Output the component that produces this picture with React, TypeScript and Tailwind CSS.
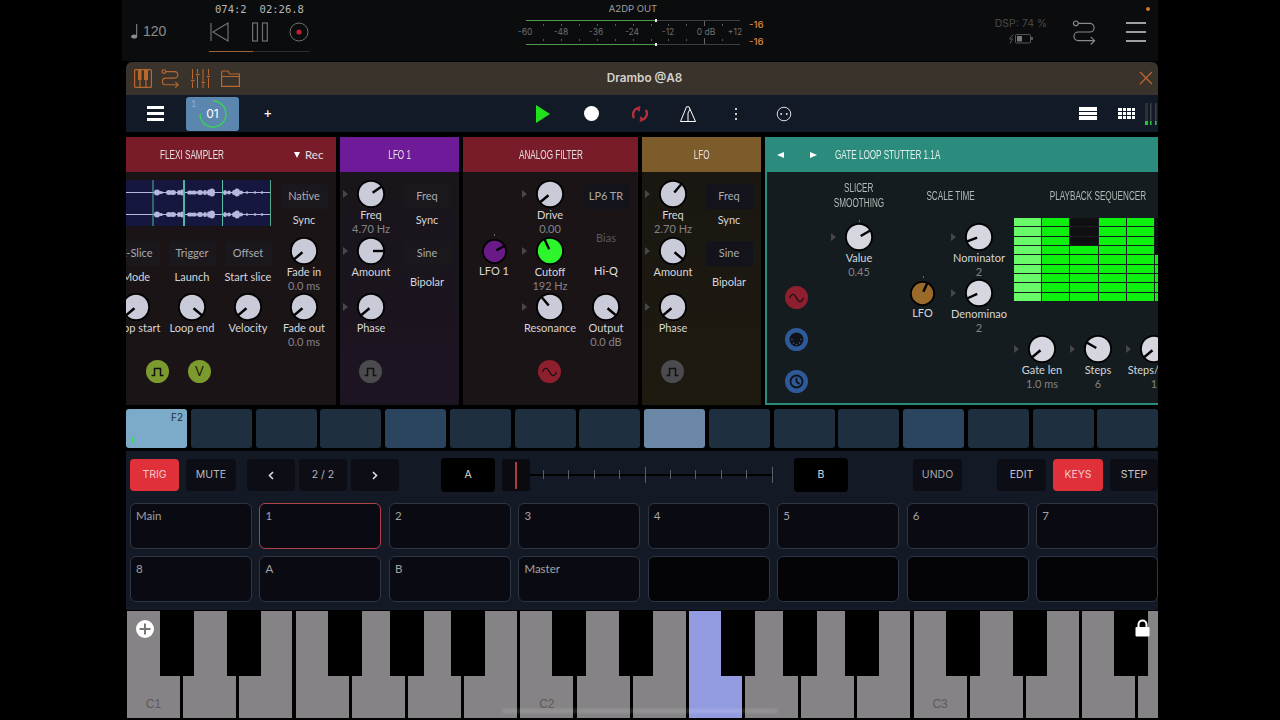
import type { ReactNode } from "react";

const Narrow = ({ children, left }: { children: ReactNode; left?: boolean }) => (
  <span className={`inline-block whitespace-nowrap scale-x-[.68] ${left ? "origin-left" : ""}`}>{children}</span>
);

const Knob = ({ angle, color = "#c9cbd9", size = 28 }: { angle: number; color?: string; size?: number }) => {
  const r = size / 2;
  const rad = (angle * Math.PI) / 180;
  const x = r + Math.sin(rad) * (r - 1.5);
  const y = r - Math.cos(rad) * (r - 1.5);
  const x0 = r + Math.sin(rad) * 2;
  const y0 = r - Math.cos(rad) * 2;
  return (
    <svg width={size} height={size} viewBox={`0 0 ${size} ${size}`} className="block shrink-0">
      <circle cx={r} cy={r} r={r} fill="#000" />
      <circle cx={r} cy={r} r={r - 1.8} fill={color} />
      <line x1={x0} y1={y0} x2={x} y2={y} stroke="#000" strokeWidth="2.4" />
    </svg>
  );
};

const Dot = () => <div className="absolute left-1/2 top-[-3px] h-[2px] w-[1px] bg-[#6a6a6e]" />;

const KnobCell = ({
  name,
  value,
  angle,
  color,
  arrow,
  clip,
  dot,
}: {
  name: string;
  value?: string;
  angle: number;
  color?: string;
  arrow?: boolean;
  clip?: boolean;
  dot?: boolean;
}) => (
  <div className="relative flex w-[56px] flex-col items-center">
    {arrow && (
      <div className="absolute left-[0px] top-[10px] h-0 w-0 border-y-[4px] border-l-[5px] border-y-transparent border-l-[#47474b]" />
    )}
    {dot && <Dot />}
    <Knob angle={angle} color={color} />
    <div className={`whitespace-nowrap text-[11px] leading-[14px] text-[#d6d6da] ${clip ? "w-[56px] self-start overflow-hidden" : ""}`}>
      {name}
    </div>
    {value && <div className="whitespace-nowrap text-[11px] leading-[13px] text-[#838387]">{value}</div>}
  </div>
);

const SmallKnob = ({ name, angle, color }: { name: string; angle: number; color: string }) => (
  <div className="relative flex flex-col items-center pt-[1.5px]">
    <Dot />
    <Knob angle={angle} color={color} size={25} />
    <div className="text-[11px] leading-[14px] text-[#d6d6da]">{name}</div>
  </div>
);

const SelectCell = ({
  text,
  label,
  dark,
  wide,
}: {
  text: string;
  label?: string;
  dark?: boolean;
  wide?: boolean;
}) => (
  <div className="flex w-[56px] flex-col items-center pt-[4px]">
    <div
      className={`flex h-[25px] w-[47px] items-center justify-center whitespace-nowrap rounded-[2px] text-[11px] text-[#a9a9ae] ${
        dark ? "bg-[#13131b]" : "bg-[#1a181d]"
      }`}
    >
      {text}
    </div>
    {label && (
      <div className={`whitespace-nowrap text-[11px] leading-[14px] text-[#d6d6da] ${wide ? "mt-[9px]" : "mt-[4px]"}`}>
        {label}
      </div>
    )}
  </div>
);

const Pulse = () => (
  <svg width="13" height="10" viewBox="0 0 13 10" fill="none" stroke="#111" strokeWidth="1.5">
    <path d="M0.5 8.5H3.5V1.5H9.5V8.5H12.5" />
  </svg>
);

const Sine = ({ stroke = "#1a0c10" }: { stroke?: string }) => (
  <svg width="15" height="10" viewBox="0 0 15 10" fill="none" stroke={stroke} strokeWidth="1.2">
    <path d="M0.5 5C2.5 0 5 0 7.5 5S12.5 10 14.5 5" />
  </svg>
);

const Mod = ({ color, children }: { color: string; children: ReactNode }) => (
  <div className={`flex h-[23px] w-[23px] shrink-0 items-center justify-center rounded-full ${color}`}>{children}</div>
);

const Header = ({ color, children }: { color: string; children: ReactNode }) => (
  <div className={`flex h-[35px] shrink-0 items-center justify-center font-['Liberation_Sans'] text-[12px] text-[#e6e0e2] ${color}`}>
    {children}
  </div>
);

const BLOBS = [
  [157, 3, 3],
  [161, 2, 1.5],
  [169, 3, 2.5],
  [173, 3, 2.5],
  [179, 2, 2.5],
  [182, 2, 3],
  [190, 3, 2],
  [194, 3, 2],
  [200, 3, 2.5],
  [205, 2, 2.5],
  [209, 2, 3],
  [212, 3, 4],
  [225, 2, 2.5],
  [229, 2, 2],
  [234, 2, 2.5],
  [237, 3, 4],
  [241, 2, 2],
  [247, 1.3, 1.3],
  [255, 1.3, 1.3],
  [262, 1.3, 1.3],
];

const Waveform = () => (
  <svg width="145" height="46" viewBox="126 180 145 46" className="block bg-[#15173f]">
    {[12.5, 34.5].map((dy) => (
      <g key={dy} fill="#b7b8de">
        <rect x="126" y={180 + dy - 0.5} width="145" height="1" />
        {BLOBS.map(([x, rx, ry]) => (
          <ellipse key={x} cx={x} cy={180 + dy} rx={rx} ry={ry} />
        ))}
      </g>
    ))}
    <rect x="152.5" y="180" width="1" height="46" fill="#4fb89a" />
    <rect x="183" y="180" width="2" height="46" fill="#4fb89a" />
    <rect x="222" y="180" width="1" height="46" fill="#58c0a8" />
    <rect x="270" y="180" width="1" height="46" fill="#4fa88a" />
  </svg>
);

const Sampler = () => (
  <div className="flex w-[210px] shrink-0 flex-col overflow-hidden">
    <Header color="bg-[#771c28]">
      <div className="flex w-full items-center">
        <span className="w-[132px] text-center">
          <Narrow>FLEXI SAMPLER</Narrow>
        </span>
        <span className="ml-[36px] flex items-center gap-[5px] font-['Lato'] text-[11.5px]">
          <span className="h-0 w-0 border-x-[3.5px] border-t-[6px] border-x-transparent border-t-white" />
          Rec
        </span>
      </div>
    </Header>
    <div className="flex-1 bg-[#1b1417] pt-[8px]">
      <div className="ml-[-18px] grid w-[224px] grid-cols-[repeat(4,56px)] grid-rows-[57px_56px_56px]">
        <div className="col-span-3 pl-[18px]">
          <Waveform />
        </div>
        <SelectCell text="Native" label="Sync" />
        <SelectCell text="X-Slice" label="Mode" />
        <SelectCell text="Trigger" label="Launch" />
        <SelectCell text="Offset" label="Start slice" />
        <KnobCell name="Fade in" value="0.0 ms" angle={-130} />
        <KnobCell name="Loop start" angle={-130} />
        <KnobCell name="Loop end" angle={130} />
        <KnobCell name="Velocity" angle={-130} />
        <KnobCell name="Fade out" value="0.0 ms" angle={-130} />
      </div>
      <div className="mt-[11px] flex gap-[19px] pl-[20px]">
        <Mod color="bg-[#7c9b2e]">
          <Pulse />
        </Mod>
        <Mod color="bg-[#7c9b2e]">
          <span className="text-[13px] text-[#1c2208]">V</span>
        </Mod>
      </div>
    </div>
  </div>
);

const LfoModule = ({
  title,
  head,
  body,
  freq,
  freqAngle,
  ampAngle,
  dark,
}: {
  title: string;
  head: string;
  body: string;
  freq: string;
  freqAngle: number;
  ampAngle: number;
  dark?: boolean;
}) => (
  <div className="flex w-[119px] shrink-0 flex-col overflow-hidden">
    <Header color={head}>
      <Narrow>{title}</Narrow>
    </Header>
    <div className={`flex-1 bg-linear-to-b pl-[3px] pt-[8px] ${body}`}>
      <div className="grid grid-cols-[repeat(2,56px)] grid-rows-[57px_56px_56px]">
        <KnobCell name="Freq" value={freq} angle={freqAngle} arrow />
        <SelectCell text="Freq" label="Sync" dark={dark} />
        <KnobCell name="Amount" angle={ampAngle} arrow />
        <SelectCell text="Sine" label="Bipolar" wide dark={dark} />
        <KnobCell name="Phase" angle={-130} arrow />
      </div>
      <div className="mt-[11px] pl-[16px]">
        <Mod color="bg-[#4b4b4f]">
          <Pulse />
        </Mod>
      </div>
    </div>
  </div>
);

const Filter = () => (
  <div className="flex w-[175px] shrink-0 flex-col overflow-hidden">
    <Header color="bg-[#771c28]">
      <Narrow>ANALOG FILTER</Narrow>
    </Header>
    <div className="flex-1 bg-[#1b1417] pl-[3px] pt-[8px]">
      <div className="grid grid-cols-[repeat(3,56px)] grid-rows-[57px_56px_56px]">
        <div />
        <KnobCell name="Drive" value="0.00" angle={-130} arrow />
        <SelectCell text="LP6 TR" dark />
        <SmallKnob name="LFO 1" angle={60} color="#6a1a86" />
        <KnobCell name="Cutoff" value="192 Hz" angle={-25} color="#2cf52c" arrow />
        <div className="flex flex-col items-center text-[11px] leading-[14px]">
          <div className="mt-[-6px] text-[#5a585c]">Bias</div>
          <div className="mt-[19px] text-[#e0e0e4]">Hi-Q</div>
        </div>
        <div />
        <KnobCell name="Resonance" angle={-40} arrow />
        <KnobCell name="Output" value="0.0 dB" angle={130} />
      </div>
      <div className="mt-[11px] pl-[72px]">
        <Mod color="bg-[#8d1f2e]">
          <Sine />
        </Mod>
      </div>
    </div>
  </div>
);

const SEQ_ROWS = [0, 1, 2, 3, 4, 5, 6, 7, 8];
const SEQ_COLS = [0, 1, 2, 3, 4, 5];

const seqCell = (row: number, col: number) => {
  if (col === 2 && row < 3) return "bg-[#0f0f12]";
  if (col === 5 && row < 4) return "bg-[#0f0f12]";
  if (col === 0) return "bg-[#69fa69]";
  return "bg-[#0ef10e]";
};

const Gate = () => (
  <div className="flex min-w-0 flex-1 flex-col overflow-hidden">
    <Header color="bg-[#2b8c7e]">
      <div className="flex w-full items-center pl-[12px] text-[#e0efe9]">
        <span className="h-0 w-0 border-y-[3.5px] border-r-[7px] border-y-transparent border-r-white" />
        <span className="ml-[26px] h-0 w-0 border-y-[3.5px] border-l-[7px] border-y-transparent border-l-white" />
        <span className="ml-[18px]">
          <Narrow left>GATE LOOP STUTTER 1.1A</Narrow>
        </span>
      </div>
    </Header>
    <div className="flex flex-1 border-b-2 border-l-2 border-[#2b8c7e] bg-[#141c1f] pt-[9px] text-[#b4bab9]">
      <div className="flex w-[59px] shrink-0 flex-col items-center gap-[19px] pt-[105px]">
        <Mod color="bg-[#8d1f2e]">
          <Sine />
        </Mod>
        <Mod color="bg-[#2f5a9a]">
          <svg width="15" height="15" viewBox="0 0 15 15">
            <circle cx="7.5" cy="7.5" r="7" fill="#101418" />
            <g fill="#2f5a9a">
              <circle cx="3" cy="7.5" r="0.8" />
              <circle cx="12" cy="7.5" r="0.8" />
              <circle cx="4.5" cy="11" r="0.8" />
              <circle cx="10.5" cy="11" r="0.8" />
              <circle cx="7.5" cy="12.5" r="0.8" />
            </g>
          </svg>
        </Mod>
        <Mod color="bg-[#2f5a9a]">
          <svg width="15" height="15" viewBox="0 0 15 15" fill="none" stroke="#101418" strokeWidth="1.8">
            <circle cx="7.5" cy="7.5" r="6" />
            <path d="M7.5 3.8V7.8L10.5 10" />
          </svg>
        </Mod>
      </div>
      <div className="flex w-[66px] shrink-0 flex-col items-center">
        <div className="flex h-[42px] flex-col items-center font-['Liberation_Sans'] text-[12px] leading-[15px]">
          <Narrow>SLICER</Narrow>
          <Narrow>SMOOTHING</Narrow>
        </div>
        <KnobCell name="Value" value="0.45" angle={60} arrow dot color="#d5d6e0" />
      </div>
      <div className="ml-[2px] flex w-[113px] shrink-0 flex-col">
        <div className="h-[42px] pt-[7.5px] text-center font-['Liberation_Sans'] text-[12px] leading-[15px]">
          <Narrow>SCALE TIME</Narrow>
        </div>
        <div className="grid grid-cols-[57px_56px] grid-rows-[56px_56px]">
          <div />
          <KnobCell name="Nominator" value="2" angle={-110} color="#d5d6e0" arrow />
          <SmallKnob name="LFO" angle={25} color="#9a6a2a" />
          <KnobCell name="Denominaotr" value="2" angle={-115} color="#d5d6e0" arrow clip />
        </div>
      </div>
      <div className="ml-[7px] flex w-[168px] shrink-0 flex-col">
        <div className="h-[37px] pt-[7.5px] text-center font-['Liberation_Sans'] text-[12px] leading-[15px]">
          <Narrow>PLAYBACK SEQUENCER</Narrow>
        </div>
        <div className="grid w-[168px] grid-cols-[repeat(6,27.2px)] gap-[1px]">
          {SEQ_ROWS.flatMap((r) => SEQ_COLS.map((c) => <div key={`${r}-${c}`} className={`h-[8.33px] ${seqCell(r, c)}`} />))}
        </div>
        <div className="mt-[34px] flex">
          <KnobCell name="Gate len" value="1.0 ms" angle={-130} color="#d5d6e0" arrow />
          <KnobCell name="Steps" value="6" angle={-60} color="#d5d6e0" arrow />
          <KnobCell name="Steps/beat" value="1" angle={-130} color="#d5d6e0" arrow />
        </div>
      </div>
    </div>
  </div>
);

const PADS = Array.from({ length: 16 }, (_, i) => i);

const padColor = (i: number) => {
  if (i === 0) return "bg-[#7babc9]";
  if (i === 8) return "bg-[#6a87a6]";
  if (i === 4 || i === 12) return "bg-[#2b4460]";
  return "bg-[#1e3040]";
};

const Btn = ({ children, className = "" }: { children: ReactNode; className?: string }) => (
  <div className={`flex h-[32px] shrink-0 items-center justify-center rounded-[4px] text-[10.5px] ${className}`}>
    {children}
  </div>
);

const TICKS = [13, 38, 64, 89, 115, 140, 165, 191, 216, 242];

const Fader = () => (
  <div className="ml-[7px] flex h-[32px] w-[271px] shrink-0">
    <div className="flex h-[32px] w-[28px] shrink-0 items-center justify-center rounded-[2px] bg-[#0a0a10]">
      <div className="h-[27px] w-[2px] bg-[#b0383e]" />
    </div>
    <svg width="243" height="32" viewBox="0 0 243 32">
      <rect x="0" y="15" width="243" height="2" fill="#000" />
      {TICKS.map((t, i) => {
        const big = i === 4 || i === 9;
        return <rect key={t} x={t} y={big ? 8 : 11} width="1" height={big ? 16 : 9} fill="#5a5f68" />;
      })}
    </svg>
  </div>
);

const TRACKS = ["Main", "1", "2", "3", "4", "5", "6", "7", "8", "A", "B", "Master", "", "", "", ""];

const WHITES = Array.from({ length: 19 }, (_, i) => i);
const BLACKS = [159.5, 226.5, 328, 390, 451, 552, 619, 721, 783, 844.5, 946, 1013, 1114];
const LABELS: Record<number, string> = { 0: "C1", 7: "C2", 14: "C3" };

const Keyboard = () => (
  <div className="relative h-[110px] overflow-hidden bg-black pt-[1px]">
    <div className="flex h-[107px] gap-[3.2px] pl-[1px]">
      {WHITES.map((i) => (
        <div key={i} className={`relative h-full w-[53px] shrink-0 ${i === 10 ? "bg-[#939be0]" : "bg-[#858385]"}`}>
          {LABELS[i] && (
            <span className="absolute bottom-[5px] left-0 w-full text-center font-['Liberation_Sans'] text-[12px] text-[#5c5a5c]">
              {LABELS[i]}
            </span>
          )}
        </div>
      ))}
    </div>
    {BLACKS.map((x) => (
      <div key={x} className="absolute top-0 h-[66px] w-[34px] bg-black" style={{ left: x - 126 }} />
    ))}
    <div className="absolute left-[10px] top-[10px] flex h-[18px] w-[18px] items-center justify-center rounded-full bg-white">
      <svg width="12" height="12" viewBox="0 0 12 12" stroke="#777" strokeWidth="2">
        <path d="M6 0.5V11.5M0.5 6H11.5" />
      </svg>
    </div>
    <svg width="15" height="18" viewBox="0 0 15 18" className="absolute left-[1009px] top-[9px]">
      <path d="M3.5 8V5.5a4 4 0 0 1 8 0V8" fill="none" stroke="#fff" strokeWidth="2" />
      <rect x="0.5" y="8" width="14" height="9.5" rx="1" fill="#fff" />
    </svg>
    <div className="absolute bottom-[7px] left-[376px] h-[4px] w-[276px] rounded-full bg-white/15 blur-[1.5px]" />
  </div>
);

const Route = ({ stroke, size = 25 }: { stroke: string; size?: number }) => (
  <svg width={size} height={size} viewBox="0 0 25 26" fill="none" stroke={stroke} strokeWidth={(1.2 * 25) / size}>
    <circle cx="3.5" cy="3.5" r="2.5" />
    <path d="M6 3.5H18a4.5 4.5 0 0 1 0 9H6a4.5 4.5 0 0 0 0 9H23M19 17.5L23 21.5L19 25.5" />
  </svg>
);

const METER_TICKS = [543, 561, 579, 597, 615, 633, 651, 668, 686, 722];
const METER_LABELS: [string, number][] = [
  ["-60", 525],
  ["-48", 561],
  ["-36", 596],
  ["-24", 632],
  ["-12", 668],
  ["0 dB", 706],
  ["+12", 735],
];

const TopBar = () => (
  <div className="flex h-[61px] bg-[#0b0c0e] text-[#8d8d8d]">
    <div className="flex w-[84px] shrink-0 items-center gap-[3px] pl-[9px] pt-[2px] text-[14px]">
      <svg width="9" height="15" viewBox="0 0 9 15" fill="#8d8d8d">
        <ellipse cx="3.2" cy="12.5" rx="3" ry="2.1" />
        <rect x="5.2" y="0" width="1" height="12" />
      </svg>
      <span className="font-['Liberation_Sans']">120</span>
    </div>
    <div className="flex w-[104px] shrink-0 flex-col">
      <div className="h-[22px] whitespace-nowrap pl-[9px] pt-[2px] font-['DejaVu_Sans_Mono'] text-[10.5px] leading-[14px] text-[#b9b9b9]">
        074:2<span className="ml-[13px]">02:26.8</span>
      </div>
      <div className="flex h-[20px] items-center pl-[4px]">
        <svg width="19" height="20" viewBox="0 0 19 20" fill="none" stroke="#707070" strokeWidth="1.2">
          <path d="M1 1V19M18 1L3 10L18 19Z" />
        </svg>
        <svg width="17" height="20" viewBox="0 0 17 20" fill="none" stroke="#707070" strokeWidth="1.2" className="ml-[23px]">
          <rect x="0.6" y="1" width="4.8" height="18" />
          <rect x="10.5" y="1" width="4.8" height="18" />
        </svg>
        <svg width="20" height="20" viewBox="0 0 20 20" className="ml-[20px]">
          <circle cx="10" cy="10" r="9" fill="none" stroke="#707070" strokeWidth="1" />
          <circle cx="10" cy="10" r="2.6" fill="#c02030" />
        </svg>
      </div>
      <div className="ml-[3px] mt-[9px] flex h-[1px] w-[101px]">
        <div className="w-[44px] bg-[#9a6238]" />
        <div className="flex-1 bg-[#2c2c2c]" />
      </div>
    </div>
    <svg width="452" height="50" viewBox="314 0 452 50" className="ml-[4px] block shrink-0">
      <text x="633" y="11.5" textAnchor="middle" fontFamily="Inter, sans-serif" fontSize="9.5" fill="#a0a0a0">
        A2DP OUT
      </text>
      <rect x="526" y="20" width="130" height="1" fill="#4f9a4c" />
      <rect x="656" y="20" width="84" height="1" fill="#3c3f3f" />
      <rect x="526" y="44" width="130" height="1" fill="#4f9a4c" />
      <rect x="656" y="44" width="84" height="1" fill="#3c3f3f" />
      <rect x="655" y="19" width="2" height="3" fill="#eee" />
      <rect x="655" y="43" width="2" height="3" fill="#eee" />
      {METER_TICKS.map((x) => (
        <g key={x} fill="#55585a">
          <rect x={x} y="24" width="1" height="2" />
          <rect x={x} y="39" width="1" height="2" />
        </g>
      ))}
      <rect x="704" y="21" width="1" height="5" fill="#666" />
      <rect x="704" y="38" width="1" height="6" fill="#666" />
      {METER_LABELS.map(([t, x]) => (
        <text key={t} x={x} y="35" textAnchor="middle" fontFamily="Inter, sans-serif" fontSize="8.5" fill="#6e6e6e">
          {t}
        </text>
      ))}
      <text x="749" y="27.5" fontFamily="Inter, sans-serif" fontSize="9.5" fontWeight="600" fill="#c87a3a">
        -16
      </text>
      <text x="749" y="44.5" fontFamily="Inter, sans-serif" fontSize="9.5" fontWeight="600" fill="#c87a3a">
        -16
      </text>
    </svg>
    <div className="ml-[220px] flex w-[70px] shrink-0 flex-col items-center pt-[17px]">
      <span className="whitespace-nowrap font-['Inter'] text-[10.5px] leading-[14px] text-[#4a4a4a]">DSP: 74 %</span>
      <svg width="26" height="10" viewBox="0 0 26 10" className="mt-[3px]" fill="none" stroke="#555">
        <path d="M5 0.5L1.5 5H4.5L2 9.5" />
        <rect x="7.5" y="0.5" width="15" height="8.5" rx="1" />
        <rect x="9" y="2" width="5" height="5.5" fill="#777" stroke="none" />
        <rect x="23" y="3" width="2" height="3" fill="#555" stroke="none" />
      </svg>
    </div>
    <div className="ml-[16px] flex w-[25px] shrink-0 items-center pt-[4px]">
      <Route stroke="#8a8a8a" />
    </div>
    <div className="relative ml-[29px] flex w-[20px] shrink-0 flex-col gap-[7px] pt-[22px]">
      <div className="h-[2px] bg-[#a0a0a0]" />
      <div className="h-[2px] bg-[#a0a0a0]" />
      <div className="h-[2px] bg-[#a0a0a0]" />
      <div className="absolute left-[20px] top-[7px] h-[4px] w-[4px] rounded-full bg-[#c87a2a]" />
    </div>
  </div>
);

const TitleBar = () => (
  <div className="relative flex h-[33px] items-center rounded-t-[6px] bg-[#3a332b] pl-[8px]">
    <svg width="18" height="19" viewBox="0 0 18 19" fill="none" stroke="#b8672f" strokeWidth="1.2">
      <rect x="0.6" y="0.6" width="16.8" height="17.8" rx="1" />
      <path d="M6 1V18M12 1V18" />
      <path d="M4 1H7.5V11H4ZM10 1H14V11H10Z" fill="#b8672f" stroke="none" />
    </svg>
    <div className="ml-[9px]">
      <Route stroke="#b8672f" size={19} />
    </div>
    <svg width="19" height="19" viewBox="0 0 19 19" fill="none" stroke="#b8672f" strokeWidth="1" className="ml-[11px]">
      <path d="M1.5 0V10M1.5 13V19M6.5 0V4M6.5 7V19M12 0V12M12 15V19M17.5 0V6M17.5 9V19" />
      <path d="M0 11.5H3.5M5 5.5H8.5M10.5 13.5H14M16 7.5H19" strokeWidth="1.5" />
    </svg>
    <svg width="19" height="17" viewBox="0 0 19 17" fill="none" stroke="#b8672f" strokeWidth="1.2" className="ml-[11px]">
      <path d="M0.6 2.5V16.4H18.4V4H8.5L7 1H1.5L0.6 2.5ZM0.6 6.5H18.4" />
    </svg>
    <div className="absolute inset-x-0 top-0 flex h-full items-center justify-center pl-[5px] font-['Inter'] text-[11.75px] font-semibold text-[#d4d2cf]">
      Drambo @A8
    </div>
    <svg width="14" height="14" viewBox="0 0 14 14" stroke="#c0672f" strokeWidth="1.2" className="absolute right-[5px] top-[9px]">
      <path d="M1 1L13 13M13 1L1 13" />
    </svg>
  </div>
);

const ToolBar = () => (
  <div className="flex h-[37px] items-center bg-[#121a27]">
    <div className="ml-[21px] flex w-[17px] shrink-0 flex-col gap-[3px]">
      <div className="h-[3px] bg-white" />
      <div className="h-[3px] bg-white" />
      <div className="h-[3px] bg-white" />
    </div>
    <div className="relative ml-[22px] flex h-[34px] w-[53px] shrink-0 items-center justify-center rounded-[3px] bg-[#5b86ae]">
      <span className="absolute left-[5px] top-0 text-[9px] text-[#8fb0d0]">1</span>
      <svg width="28" height="28" viewBox="0 0 28 28" fill="none" className="absolute left-[12.5px] top-[3px]">
        <path d="M14 1A13 13 0 1 1 1 14" stroke="#39d353" strokeWidth="1.4" />
      </svg>
      <span className="font-['Inter'] text-[12px] text-white">01</span>
    </div>
    <span className="ml-[25px] w-[8px] text-[13px] font-semibold text-white">+</span>
    <svg width="14" height="18" viewBox="0 0 14 18" className="ml-[264px]">
      <path d="M0 0L14 9L0 18Z" fill="#22e01e" />
    </svg>
    <div className="ml-[34px] h-[15px] w-[15px] rounded-full bg-white" />
    <svg width="16" height="16" viewBox="0 0 16 16" fill="none" stroke="#b5303a" strokeWidth="2.4" className="ml-[33px]">
      <path d="M2.2 12A6.5 6.5 0 0 1 5.5 2.2M13.8 4A6.5 6.5 0 0 1 10.5 13.8" />
      <path d="M8 0L4 2.5L7.5 5.5ZM8 16L12 13.5L8.5 10.5Z" fill="#b5303a" strokeWidth="0.5" />
    </svg>
    <svg width="16" height="16" viewBox="0 0 16 16" fill="none" stroke="#fff" strokeWidth="1" className="ml-[32px]">
      <path d="M0.5 15.5L6.5 0.8H9L15.5 15.5ZM8 15.5L8 7M8 7L10 3" />
    </svg>
    <div className="ml-[32px] flex w-[16px] shrink-0 flex-col items-center gap-[3px]">
      <div className="h-[2px] w-[2px] bg-[#ccc]" />
      <div className="h-[2px] w-[2px] bg-[#ccc]" />
      <div className="h-[2px] w-[2px] bg-[#ccc]" />
    </div>
    <svg width="16" height="16" viewBox="0 0 16 16" fill="none" stroke="#ddd" className="ml-[32px]">
      <circle cx="8" cy="8" r="6.8" />
      <circle cx="5.2" cy="8" r="1" fill="#ddd" stroke="none" />
      <circle cx="10.8" cy="8" r="1" fill="#ddd" stroke="none" />
    </svg>
    <div className="ml-[287px] flex w-[18px] shrink-0 flex-col gap-[1px]">
      <div className="h-[3.6px] bg-white" />
      <div className="h-[3.6px] bg-white" />
      <div className="h-[3.6px] bg-white" />
    </div>
    <div className="ml-[21px] grid w-[17px] shrink-0 grid-cols-4 gap-[1px]">
      {Array.from({ length: 12 }, (_, i) => (
        <div key={i} className="h-[3.3px] bg-white" />
      ))}
    </div>
    <svg width="13" height="22" viewBox="0 0 13 22" className="ml-[10px]">
      {[0, 5, 10].map((x) => (
        <g key={x}>
          <rect x={x} y="0" width={x ? 1.5 : 3} height="22" fill={x ? "#3c4148" : "#2c3138"} />
          <rect x={x} y="18" width={x ? 1.5 : 3} height="4" fill="#2bbf3c" />
        </g>
      ))}
    </svg>
  </div>
);

export default function App() {
  return (
    <div className="h-[720px] w-[1280px] overflow-hidden bg-black font-['Lato',sans-serif]">
      <div className="ml-[122px] w-[1036px]">
        <TopBar />
        <div className="mt-[1px] pl-[4px]">
          <TitleBar />
          <ToolBar />
          <div className="mt-[5px] flex h-[268px] gap-[4px]">
            <Sampler />
            <LfoModule
              title="LFO 1"
              head="bg-[#6f1a98]"
              body="from-[#19151a] to-[#1d1422]"
              freq="4.70 Hz"
              freqAngle={55}
              ampAngle={90}
            />
            <Filter />
            <LfoModule
              title="LFO"
              head="bg-[#7d5c2c]"
              body="from-[#1a1712] to-[#1e1a10]"
              freq="2.70 Hz"
              freqAngle={40}
              ampAngle={130}
              dark
            />
            <Gate />
          </div>
          <div className="mt-[4px] flex h-[39px] gap-[3.77px] overflow-hidden">
            {PADS.map((i) => (
              <div key={i} className={`relative h-full w-[61px] shrink-0 rounded-[3px] ${padColor(i)}`}>
                {i === 0 && (
                  <>
                    <span className="absolute right-[4px] top-[1px] font-['Inter'] text-[10px] text-[#22303a]">F2</span>
                    <span className="absolute bottom-[5px] left-[5px] h-[6px] w-[3px] bg-[#39e053]" />
                  </>
                )}
              </div>
            ))}
          </div>
          <div className="mt-[3px] h-[159px] bg-[#131a26] pl-[4px] pt-[7px] font-['Inter']">
            <div className="flex items-center">
              <Btn className="w-[49px] bg-[#e0303a] text-[#f5c8cb]">TRIG</Btn>
              <Btn className="ml-[7px] w-[50px] bg-[#0c0d15] text-[#b8b8bc]">MUTE</Btn>
              <Btn className="ml-[11px] w-[48px] bg-[#0c0d15]">
                <svg width="6" height="9" viewBox="0 0 6 9" fill="none" stroke="#ddd" strokeWidth="1.6">
                  <path d="M5 1L1.5 4.5L5 8" />
                </svg>
              </Btn>
              <Btn className="ml-[4px] w-[48px] bg-[#0c0d15] text-[#b8b8bc]">2 / 2</Btn>
              <Btn className="ml-[4px] w-[48px] bg-[#0c0d15]">
                <svg width="6" height="9" viewBox="0 0 6 9" fill="none" stroke="#ddd" strokeWidth="1.6">
                  <path d="M1 1L4.5 4.5L1 8" />
                </svg>
              </Btn>
              <Btn className="ml-[42px] !h-[34px] w-[54px] bg-black text-[#ddd]">A</Btn>
              <Fader />
              <Btn className="ml-[21px] !h-[34px] w-[54px] bg-black text-[#ddd]">B</Btn>
              <Btn className="ml-[65px] w-[49px] bg-[#0c0d15] text-[#a8a8ac]">UNDO</Btn>
              <Btn className="ml-[35px] w-[49px] bg-[#0c0d15] text-[#c8c8cc]">EDIT</Btn>
              <Btn className="ml-[7px] w-[50px] bg-[#e0303a] text-[#f5c8cb]">KEYS</Btn>
              <Btn className="ml-[7px] w-[48px] bg-[#0c0d15] text-[#c8c8cc]">STEP</Btn>
            </div>
            <div className="mt-[11px] grid w-[1028px] grid-cols-8 gap-x-[7.7px] gap-y-[7px] font-['Lato']">
              {TRACKS.map((t, i) => (
                <div
                  key={i}
                  className={`h-[46px] rounded-[6px] border px-[5px] pt-[3px] text-[11.5px] leading-[17px] text-[#a2a2a6] ${
                    i === 1 ? "border-[#b0404a]" : "border-[#2e3644]"
                  } ${i > 11 ? "bg-[#040406]" : "bg-[#0a0b12]"}`}
                >
                  {t}
                </div>
              ))}
            </div>
          </div>
          <Keyboard />
        </div>
      </div>
    </div>
  );
}
